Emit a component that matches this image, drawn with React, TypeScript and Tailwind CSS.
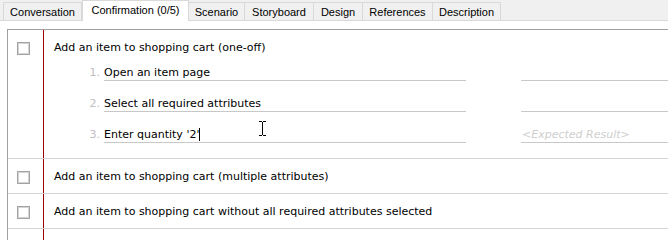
import React from "react";

const tabs = [
  { label: "Conversation", w: 79 },
  { label: "Confirmation (0/5)", w: 107, active: true },
  { label: "Scenario", w: 57 },
  { label: "Storyboard", w: 70 },
  { label: "Design", w: 50 },
  { label: "References", w: 71 },
  { label: "Description", w: 69 },
];

const steps = ["Open an item page", "Select all required attributes", "Enter quantity '2'"];

function Checkbox() {
  return (
    <div className="w-[13px] h-[13px] border border-[#a3a3a3] shadow-[inset_0_0_0_1px_#d4d4d4] bg-white" />
  );
}

export default function App() {
  return (
    <div
      className="w-[668px] h-[240px] bg-white overflow-hidden text-black text-[11px]"
      style={{ fontFamily: '"DejaVu Sans", Verdana, sans-serif' }}
    >
      {/* tab strip */}
      <div
        className="relative h-[21px] bg-[#f0f0f0] border-b border-[#d9d9d9] flex items-end pl-[3px]"
        style={{ fontFamily: '"Liberation Sans", Arial, sans-serif' }}
      >
        {tabs.map((t) =>
          t.active ? (
            <div
              key={t.label}
              style={{ width: t.w }}
              className="relative -mb-px h-[21px] bg-white border border-b-0 border-[#d9d9d9] flex items-start justify-center pt-[2px] leading-[14px] z-10"
            >
              {t.label}
            </div>
          ) : (
            <div
              key={t.label}
              style={{ width: t.w }}
              className="h-[18px] border border-b-0 border-[#d9d9d9] -ml-px first:ml-0 flex items-center justify-center leading-[14px]"
            >
              {t.label}
            </div>
          )
        )}
      </div>

      {/* list */}
      <div className="pt-[8px] pl-[7px]">
        <div className="relative border-l border-t border-[#a0a0a0]">
          {/* row 1, expanded */}
          <div className="flex h-[129px] border-b border-[#d5d5d5]">
            <div className="w-[36px] shrink-0 border-r border-[#a00000] pl-[9px] pt-[12px]">
              <Checkbox />
            </div>
            <div className="flex-1 pl-[10px]">
              <div className="h-[20px] pt-[10px] leading-[16px]">Add an item to shopping cart (one-off)</div>
              <div className="pl-[30px]">
                {steps.map((s, i) => (
                  <div key={s} className="flex h-[31px]">
                    <div className="w-[20px] pr-[4px] text-right text-[#c4bcc4] self-end leading-[14px] pb-px">
                      {i + 1}.
                    </div>
                    <div className="w-[362px] border-b border-[#c8c8c8] flex items-end leading-[14px]">
                      {s}
                      {i === 2 && <span className="inline-block w-px h-[13px] bg-black mb-px" />}
                    </div>
                    <div className="ml-[55px] flex-1 border-b border-[#c8c8c8] flex items-end leading-[14px] pl-px">
                      {i === 2 && <span className="italic text-[#cfcfcf]">&lt;Expected Result&gt;</span>}
                    </div>
                  </div>
                ))}
              </div>
            </div>
          </div>

          {/* row 2 */}
          <div className="flex h-[35px] border-b border-[#d5d5d5]">
            <div className="w-[36px] shrink-0 border-r border-[#a00000] pl-[9px] pt-[12px]">
              <Checkbox />
            </div>
            <div className="flex-1 pl-[10px] pt-[10px] leading-[16px]">Add an item to shopping cart (multiple attributes)</div>
          </div>

          {/* row 3 */}
          <div className="flex h-[35px] border-b border-[#d5d5d5]">
            <div className="w-[36px] shrink-0 border-r border-[#a00000] pl-[9px] pt-[12px]">
              <Checkbox />
            </div>
            <div className="flex-1 pl-[10px] pt-[10px] leading-[16px]">
              Add an item to shopping cart without all required attributes selected
            </div>
          </div>

          {/* empty row */}
          <div className="flex h-[20px]">
            <div className="w-[36px] shrink-0 border-r border-[#a00000]" />
          </div>

          {/* mouse I-beam cursor */}
          <svg className="absolute left-[250px] top-[91px]" width="9" height="15" viewBox="0 0 9 15">
            <path d="M1 0.5h3M5 0.5h3M4.5 1v13M1 14.5h3M5 14.5h3" stroke="#000" strokeWidth="1" fill="none" />
          </svg>
        </div>
      </div>
    </div>
  );
}
